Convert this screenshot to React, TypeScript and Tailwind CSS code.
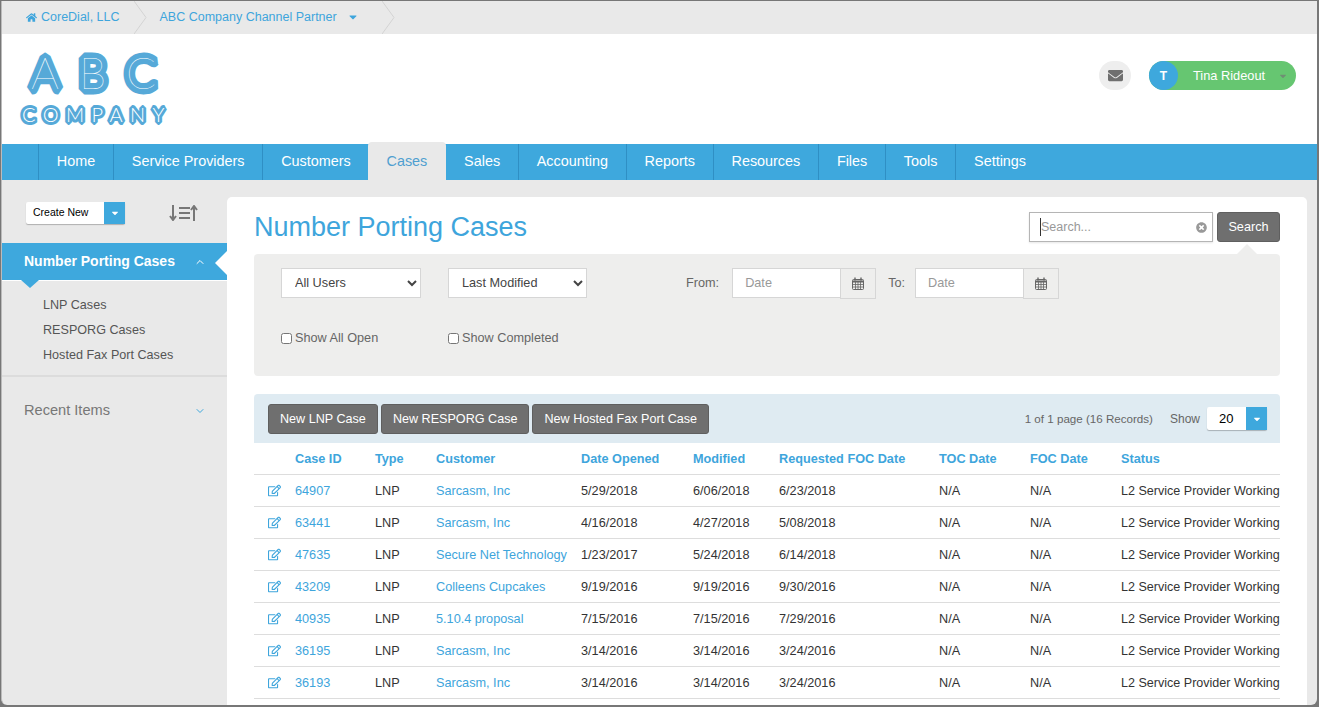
import { FaHome, FaEnvelope, FaRegEdit, FaTimesCircle, FaCaretDown } from "react-icons/fa";
import { ChevronUp, ChevronDown } from "lucide-react";

const navItems = ["Home", "Service Providers", "Customers", "Cases", "Sales", "Accounting", "Reports", "Resources", "Files", "Tools", "Settings"];

const cases = [
  { id: "64907", customer: "Sarcasm, Inc", opened: "5/29/2018", modified: "6/06/2018", foc: "6/23/2018" },
  { id: "63441", customer: "Sarcasm, Inc", opened: "4/16/2018", modified: "4/27/2018", foc: "5/08/2018" },
  { id: "47635", customer: "Secure Net Technology", opened: "1/23/2017", modified: "5/24/2018", foc: "6/14/2018" },
  { id: "43209", customer: "Colleens Cupcakes", opened: "9/19/2016", modified: "9/19/2016", foc: "9/30/2016" },
  { id: "40935", customer: "5.10.4 proposal", opened: "7/15/2016", modified: "7/15/2016", foc: "7/29/2016" },
  { id: "36195", customer: "Sarcasm, Inc", opened: "3/14/2016", modified: "3/14/2016", foc: "3/24/2016" },
  { id: "36193", customer: "Sarcasm, Inc", opened: "3/14/2016", modified: "3/14/2016", foc: "3/24/2016" },
];

const headers = ["", "Case ID", "Type", "Customer", "Date Opened", "Modified", "Requested FOC Date", "TOC Date", "FOC Date", "Status"];

const Crumb = () => (
  <svg width="13" height="33" viewBox="0 0 13 33" className="shrink-0">
    <polyline points="0,0 12,16.5 0,33" fill="none" stroke="#d4d4d4" strokeWidth="1" />
  </svg>
);

// white thin letters over a thick blue stroke give the logo's inline look
const Logo = () => (
  <svg width="170" height="80" viewBox="0 0 170 80" className="block">
    <text x="12 60 107" y="39.5" fontFamily="Lato, sans-serif" fontWeight="100" fontSize="44" fill="#ffffff" stroke="#56a9d8" strokeWidth="11" strokeLinejoin="bevel" paintOrder="stroke">ABC</text>
    <text x="3" y="73.25" fontFamily="Lato, sans-serif" fontWeight="300" fontSize="20" letterSpacing="7.4" fill="#ffffff" stroke="#56a9d8" strokeWidth="6" strokeLinejoin="bevel" paintOrder="stroke">COMPANY</text>
  </svg>
);

const CalendarIcon = () => (
  <svg width="12" height="13" viewBox="0 0 12 13" fill="none" stroke="#666" strokeWidth="1">
    <rect x="0.5" y="2.5" width="11" height="10" rx="1" />
    <path d="M1 4.5h10" strokeWidth="2" />
    <path d="M1 7.5h10M1 10h10M3.5 5v7M6 5v7M8.5 5v7" strokeWidth="0.8" />
    <path d="M3 0.5v3M9 0.5v3" strokeWidth="1.4" />
  </svg>
);

const DateField = () => (
  <div className="flex">
    <input
      placeholder="Date"
      className="w-[108px] h-[30px] px-3 bg-white border border-[#d6d6d6] border-r-0 text-[12.7px] outline-none placeholder:text-[#999]"
    />
    <span className="w-[36px] h-[31px] flex items-center justify-center bg-[#eeeeed] border border-[#d6d6d6]">
      <CalendarIcon />
    </span>
  </div>
);

const Dropdown = ({ label, className }: { label: string; className: string }) => (
  <div className={`flex bg-white rounded-[2px] shadow-[0_1px_1px_rgba(0,0,0,0.25)] text-black ${className}`}>
    <span className="flex-1 flex items-center">{label}</span>
    <span className="w-[21px] bg-[#3ea8dd] flex items-center justify-center text-white">
      <FaCaretDown size={10} />
    </span>
  </div>
);

export default function App() {
  return (
    <div className="w-[1319px] h-[707px] overflow-hidden bg-[#777] font-['Liberation_Sans',Arial,sans-serif] text-[12.7px] text-[#333]">
      <div className="w-[1316px] h-[704px] ml-px mt-px rounded-b-[6px] overflow-hidden border-l border-[#bbb] bg-[#e9e9e9] flex flex-col">
        {/* breadcrumb */}
        <div className="h-[33px] shrink-0 flex items-center bg-[#e9e9e9] text-[#3ea5dc] text-[12.5px]">
          <div className="flex items-center gap-[4px] pl-[24px] pr-[14px]">
            <FaHome size={11} />
            <span>CoreDial, LLC</span>
          </div>
          <span className="mr-[13px]">
            <Crumb />
          </span>
          <span>ABC Company Channel Partner</span>
          <FaCaretDown size={12} className="ml-[10px] -mt-[2px] mr-[23px]" />
          <Crumb />
        </div>

        {/* logo and user */}
        <div className="h-[110px] shrink-0 bg-white flex justify-between pl-[17px] pr-[21px] pt-[15px]">
          <Logo />
          <div className="flex items-start gap-[18px] pt-[12px]">
            <span className="w-[32px] h-[29px] rounded-full bg-[#eeeeee] flex items-center justify-center text-[#6f6f6f]">
              <FaEnvelope size={15} />
            </span>
            <div className="w-[147px] h-[29px] rounded-full bg-[#66c671] flex items-center text-white">
              <span className="w-[29px] h-[29px] rounded-full bg-[#3ea8dd] flex items-center justify-center font-bold text-[12px]">T</span>
              <span className="ml-[15px] text-[12.8px]">Tina Rideout</span>
              <FaCaretDown size={10} className="ml-[13px] text-[#6f8f73]" />
            </div>
          </div>
        </div>

        {/* main nav */}
        <nav className="h-[36px] shrink-0 bg-[#3ea8dd] flex pl-[36px] text-white text-[14.4px]">
          {navItems.map((item) =>
            item === "Cases" ? (
              <span key={item} className="h-[38px] -mt-[2px] -ml-[1px] px-[19px] pt-[2px] bg-[#e9e9e9] rounded-t-[4px] flex items-center text-[#4f9fd0]">
                {item}
              </span>
            ) : (
              <span key={item} className={`px-[17.8px] flex items-center border-l border-[#2f8fc4] ${item === "Sales" ? "border-l-0" : ""}`}>
                {item}
              </span>
            )
          )}
        </nav>

        <div className="flex-1 flex min-h-0">
          {/* sidebar */}
          <aside className="w-[225px] shrink-0">
            <div className="flex items-center h-[23px] mt-[21px] pl-[24px]">
              <Dropdown label="Create New" className="w-[99px] h-[22px] pl-[7px] text-[10.5px]" />
              <svg width="29" height="16" viewBox="0 0 29 16" className="ml-[44px]" fill="none" stroke="#777" strokeWidth="2">
                <path d="M4 0v14M1 11l3 4 3-4" />
                <path d="M10 3h11M10 8h11M10 13h11" strokeWidth="1.8" />
                <path d="M25 16V2M22 5l3-4 3 4" />
              </svg>
            </div>

            <div className="relative mt-[19px] h-[37px] bg-[#3ea8dd] flex items-center justify-between pl-[22px] pr-[21px] text-white font-bold text-[14px]">
              <span>Number Porting Cases</span>
              <ChevronUp size={12} strokeWidth={2} />
              <span className="absolute right-0 top-[8px] w-0 h-0 border-y-[12px] border-y-transparent border-r-[12px] border-r-white" />
              <span className="absolute left-[19px] -bottom-[8px] w-0 h-0 border-x-[9px] border-x-transparent border-t-[8px] border-t-[#3ea8dd]" />
            </div>

            <div className="h-[97px] pt-[15px] pl-[41px] flex flex-col gap-[6px] border-t border-white border-b-2 border-b-[#dcdcdc] text-[#555] text-[12.6px] leading-[19px]">
              <span>LNP Cases</span>
              <span>RESPORG Cases</span>
              <span>Hosted Fax Port Cases</span>
            </div>

            <div className="flex items-center justify-between pl-[22px] pr-[21px] pt-[23px] text-[#777] text-[14.6px]">
              <span>Recent Items</span>
              <ChevronDown size={12} strokeWidth={2} className="text-[#3ea8dd]" />
            </div>
          </aside>

          {/* content card */}
          <main className="w-[1080px] mt-[17px] bg-white rounded-t-[5px] px-[27px] min-w-0">
            <div className="h-[57px] flex items-start justify-between">
              <h1 className="mt-[13px] text-[27px] leading-[34px] text-[#3ea5dc]">Number Porting Cases</h1>
              <div className="flex gap-[4px] mt-[15px] relative">
                <div className="w-[184px] h-[30px] border border-[#b5b5b5] flex items-center pl-[10px] pr-[5px] shadow-[0_1px_2px_rgba(0,0,0,0.1)]">
                  <input placeholder="Search..." className="flex-1 min-w-0 text-[12.5px] outline-none placeholder:text-[#999] border-l border-[#333]" />
                  <FaTimesCircle size={11} className="text-[#999]" />
                </div>
                <button className="w-[63px] h-[30px] pt-px rounded-[3px] bg-[#6f6f6f] border border-[#5f5f5f] text-white text-[12.7px]">Search</button>
                <span className="absolute right-[23px] -bottom-[12px] w-0 h-0 border-x-[10px] border-x-transparent border-b-[10px] border-b-[#eeeeed]" />
              </div>
            </div>

            {/* filters */}
            <div className="h-[122px] bg-[#eeeeed] rounded-[4px] pt-[14px] pl-[27px] text-[#666]">
              <div className="flex items-start">
                <select className="w-[140px] h-[30px] pl-[9px] bg-white border border-[#d6d6d6] text-[#444]">
                  <option>All Users</option>
                </select>
                <select className="w-[139px] h-[30px] ml-[27px] pl-[9px] bg-white border border-[#d6d6d6] text-[#444]">
                  <option>Last Modified</option>
                </select>
                <span className="ml-[99px] mr-[13px] leading-[30px]">From:</span>
                <DateField />
                <span className="ml-[12px] mr-[10px] leading-[30px]">To:</span>
                <DateField />
              </div>
              <div className="flex mt-[30px]">
                <label className="w-[167px] flex items-center gap-[3px]">
                  <input type="checkbox" className="w-[11px] h-[11px]" />
                  Show All Open
                </label>
                <label className="flex items-center gap-[3px]">
                  <input type="checkbox" className="w-[11px] h-[11px]" />
                  Show Completed
                </label>
              </div>
            </div>

            {/* toolbar */}
            <div className="mt-[18px] h-[49px] bg-[#dfebf2] rounded-t-[4px] flex items-center pl-[14px] pr-[13px]">
              <div className="flex gap-[3px]">
                {["New LNP Case", "New RESPORG Case", "New Hosted Fax Port Case"].map((label) => (
                  <button key={label} className="h-[30px] px-[11px] pt-px rounded-[3px] bg-[#6f6f6f] border border-[#5f5f5f] text-white text-[12.6px]">
                    {label}
                  </button>
                ))}
              </div>
              <span className="ml-auto text-[#666] text-[11.6px]">1 of 1 page (16 Records)</span>
              <span className="ml-[17px] text-[#666] text-[12px]">Show</span>
              <Dropdown label="20" className="ml-[7px] w-[60px] h-[23px] pl-[12px] text-[13px]" />
            </div>

            {/* cases table */}
            <table className="w-[1026px] table-fixed border-collapse">
              <colgroup>
                <col className="w-[41px]" />
                <col className="w-[80px]" />
                <col className="w-[61px]" />
                <col className="w-[145px]" />
                <col className="w-[112px]" />
                <col className="w-[86px]" />
                <col className="w-[160px]" />
                <col className="w-[91px]" />
                <col className="w-[91px]" />
                <col className="w-[159px]" />
              </colgroup>
              <thead>
                <tr className="h-[31px] border-b border-[#ddd]">
                  {headers.map((h, i) => (
                    <th key={i} className="p-0 pt-[2px] text-left font-bold text-[#3ea5dc] whitespace-nowrap">
                      {h}
                    </th>
                  ))}
                </tr>
              </thead>
              <tbody>
                {cases.map((c) => (
                  <tr key={c.id} className="h-[32px] border-b border-[#ddd]">
                    <td className="p-0 pl-[14px] text-[#3ea5dc]">
                      <FaRegEdit size={13} />
                    </td>
                    <td className="p-0 pt-[3px] text-[#3ea5dc]">{c.id}</td>
                    <td className="p-0 pt-[3px]">LNP</td>
                    <td className="p-0 pt-[3px] text-[#3ea5dc] whitespace-nowrap">{c.customer}</td>
                    <td className="p-0 pt-[3px]">{c.opened}</td>
                    <td className="p-0 pt-[3px]">{c.modified}</td>
                    <td className="p-0 pt-[3px]">{c.foc}</td>
                    <td className="p-0 pt-[3px]">N/A</td>
                    <td className="p-0 pt-[3px]">N/A</td>
                    <td className="p-0 pt-[3px] text-[12.55px] whitespace-nowrap">L2 Service Provider Working</td>
                  </tr>
                ))}
              </tbody>
            </table>
          </main>
        </div>
      </div>
    </div>
  );
}
